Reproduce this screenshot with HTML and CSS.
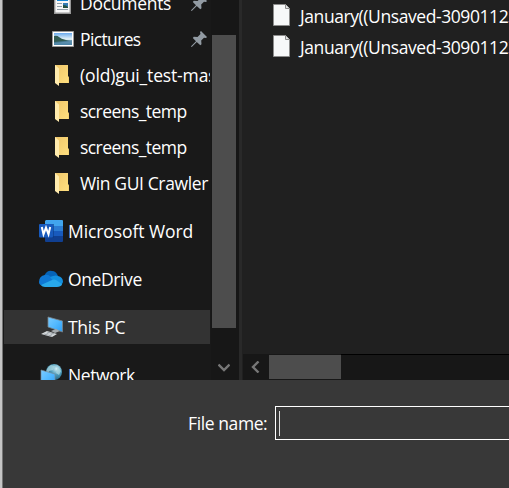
FILE: index.html
```html
<!DOCTYPE html>
<html lang="en">
<head>
<meta charset="utf-8">
<title>Save As</title>
<link rel="stylesheet" href="styles.css">
</head>
<body>
<svg class="defs" aria-hidden="true">
  <defs>
    <linearGradient id="fold" x1="0" y1="0" x2="1" y2="1"><stop offset="0" stop-color="#efc66a"/><stop offset="1" stop-color="#ffe080"/></linearGradient>
    <linearGradient id="sky" x1="0" y1="0" x2="0" y2="1"><stop offset="0" stop-color="#69a9ed"/><stop offset=".5" stop-color="#e4f2f7"/><stop offset="1" stop-color="#5794bd"/></linearGradient>
    <linearGradient id="screen" x1="0" y1="0" x2="1" y2="1"><stop offset="0" stop-color="#7acbff"/><stop offset=".5" stop-color="#53b9ff"/><stop offset="1" stop-color="#2d9df4"/></linearGradient>
    <radialGradient id="globe" cx=".65" cy=".3" r=".8"><stop offset="0" stop-color="#d4f0f7"/><stop offset=".45" stop-color="#4c9bb9"/><stop offset="1" stop-color="#1d5879"/></radialGradient>
    <symbol id="folder" viewBox="0 0 15 21"><path d="M1 0h13v11l1 2v5H4L1 15z" fill="url(#fold)"/><path d="M1 0l4 3.500V21l-4-3z" fill="#ffebad"/><path d="M14 11l1 2v5h-1z" fill="#f3d173"/></symbol>
    <symbol id="pin" viewBox="0 0 16 16"><path d="M10 0l6 6-1 1-2-.3-2.800 2.800.3 3.700-1.200 1L5.800 11 1 15.800 0 16l.3-1L5 10.200 1.800 7l1-1.200 3.700.3 3-3L9 1z" fill="#929ba3"/></symbol>
    <symbol id="page" viewBox="0 0 17 22"><path d="M.5.5h12l4 4v17H.5z" fill="#f7f8f9" stroke="#8c8c8c"/><path d="M12.500.5v4h4" fill="#e2e3e4" stroke="#8c8c8c"/></symbol>
  </defs>
</svg>
<div class="dialog">
  <div class="browser">
    <nav class="tree">
      <div class="row sub"><svg class="doc" viewBox="0 0 17 22"><path d="M.7.7h15.600v20.600H.7z" fill="#f7f7f7" stroke="#979797" stroke-width="1.400"/><path d="M3 3h11v6H3z" fill="#1687d5"/><path d="M3 11.500h5M3 14.500h5M3 17.500h11" stroke="#92a0aa"/><path d="M9 11h5v5H9z" fill="#347cb4"/><path d="M9 13q3 0 5 2v1H9z" fill="#23513f"/></svg><span class="label docs">Documents</span><svg class="pin"><use href="#pin"/></svg></div>
      <div class="row sub"><svg class="pic" viewBox="0 0 22 16"><path d="M.5.5h21v15H.5z" fill="#fff" stroke="#999"/><path d="M2 2h18v12H2z" fill="url(#sky)"/><path d="M2 5q3-1 5 1t7 3l5 1-8 1-9 1z" fill="#315b52"/><path d="M2 11l18-2v5H2z" fill="#477d9e" opacity=".75"/></svg><span class="label pics">Pictures</span><svg class="pin"><use href="#pin"/></svg></div>
      <div class="row sub"><svg class="folder"><use href="#folder"/></svg><span class="label old">(old)gui_test-master</span></div>
      <div class="row sub"><svg class="folder"><use href="#folder"/></svg><span class="label temp">screens_temp</span></div>
      <div class="row sub"><svg class="folder"><use href="#folder"/></svg><span class="label temp">screens_temp</span></div>
      <div class="row sub"><svg class="folder"><use href="#folder"/></svg><span class="label crawler">Win GUI Crawler</span></div>
      <div class="row root first"><svg class="app" viewBox="0 0 24 24"><path d="M7 1h16a1 1 0 0 1 1 1v5H6V2z" fill="#41a5ee"/><path d="M6 7h18v5H6z" fill="#2b7cd3"/><path d="M6 12h18v5H6z" fill="#185abd"/><path d="M6 17h18v5a1 1 0 0 1-1 1H7a1 1 0 0 1-1-1z" fill="#103f91"/><path d="M6 5h9v14H6z" fill="#0b3b82" opacity=".6"/><rect y="5" width="14" height="13.500" rx="1" fill="#185abd"/><path d="M2.800 8l1.700 7.300L7 8.600l2.500 6.700L11.200 8" fill="none" stroke="#fff" stroke-width="2"/></svg><span class="label word">Microsoft Word</span></div>
      <div class="row root"><svg class="app" viewBox="0 0 24 24"><path d="M5 9Q8 3 13 4q4 0 6 5l-4 5z" fill="#0664b8"/><path d="M0 15q0-6 6-7 3-1 6 2l4 2-12 7q-4-1-4-4z" fill="#0f78d4"/><path d="M11 10l3-1q3-1 5 0 5 1 5 6l-2 4-7-4z" fill="#1490df"/><path d="M2 18l11-5q2-1 4 0l6 4q-1 3-5 3H6q-3 0-4-2z" fill="#28a8ea"/></svg><span class="label drive">OneDrive</span></div>
      <div class="row root selected"><svg class="app" viewBox="0 0 24 24"><path d="M9 2l14.500 4v11L9 12z" fill="url(#screen)" stroke="#78858d" stroke-width=".8"/><path d="M12 16l5-2 4 2-5 2z" fill="#a5aaad"/><path d="M2 19l6-3 10 3-5 3z" fill="#d5d9db"/><path d="M5 19l8 2M8 17l7 2M6 20l5-3M10 21l5-3" stroke="#8b9298" stroke-width=".6"/></svg><span class="label pc">This PC</span></div>
      <div class="row root"><svg class="app" viewBox="0 0 24 24"><circle cx="15" cy="9" r="8" fill="url(#globe)"/><path d="M12 2l4 1-2 4-4 1-1 5-2-4q1-5 5-7zm7 2l3 4-2 4-3-2z" fill="#a9d6df" opacity=".75"/><path d="M2 7l14 4v13L2 20z" fill="url(#screen)" stroke="#788e9b" stroke-width=".7"/></svg><span class="label net">Network</span></div>
    </nav>
    <div class="vscroll"><div class="vthumb"></div><svg class="down" viewBox="0 0 12 10"><path d="M.5 1.500L6 7l5.500-5.500" fill="none" stroke="#777" stroke-width="2.400"/></svg></div>
    <div class="divider"></div>
    <main class="files">
      <div class="list">
        <div class="file"><svg class="page"><use href="#page"/></svg><span class="filename">January((Unsaved-309011234</span></div>
        <div class="file"><svg class="page"><use href="#page"/></svg><span class="filename">January((Unsaved-309011234</span></div>
      </div>
      <div class="hscroll"><svg class="left" viewBox="0 0 10 12"><path d="M8.500 .5L3 6l5.500 5.500" fill="none" stroke="#777" stroke-width="2.400"/></svg><div class="hthumb"></div><div class="htrack"></div></div>
    </main>
  </div>
  <footer class="footer"><span class="field-label">File name:</span><div class="input"><i class="caret"></i></div></footer>
</div>
</body>
</html>
```
FILE: styles.css
```css
* { box-sizing: border-box; }
body { margin: 0; overflow: hidden; color: #fff; background: #383838; font: 17.5px/24px "Open Sans", "Noto Sans", sans-serif; }
.defs { position: absolute; width: 0; height: 0; }
svg { display: block; flex: none; }
.dialog { width: 509px; height: 488px; border-left: 2px solid #c5c5c5; box-shadow: inset 1px 0 #757575; overflow: hidden; padding-left: 1px; }
.browser { display: flex; height: 380px; background: #191919; overflow: hidden; }
.tree { width: 208px; overflow: hidden; flex: none; }
.tree .row:first-child { margin-top: -14px; }
.row { display: flex; align-items: center; height: 36px; width: 207px; white-space: nowrap; overflow: hidden; }
.sub { padding-left: 49px; }
.root { height: 34px; margin-top: 14px; padding-left: 36px; }
.first { margin-top: 12px; }
.selected { background: #333; margin-left: 1px; padding-left: 35px; width: 206px; }
.label { flex: none; }
.sub .label { margin-top: -2px; }
.folder { width: 15px; height: 21px; margin: -1px 11px 0 2px; }
.doc { width: 17px; height: 22px; margin: -2px 9px 0 2px; }
.pic { width: 22px; height: 16px; margin: -2px 6px 0 0; }
.app { width: 24px; height: 24px; margin-right: 5px; }
.pin { width: 16px; height: 16px; margin: -2px 3px 0 auto; }
.docs { letter-spacing: -.28px; }
.pics { letter-spacing: -.63px; }
.old { letter-spacing: -.14px; }
.temp { letter-spacing: -.55px; }
.crawler { letter-spacing: -.38px; }
.word { letter-spacing: -.08px; }
.drive { letter-spacing: -.4px; }
.pc { letter-spacing: -.3px; }
.net { letter-spacing: -.4px; }
.vscroll { width: 27px; flex: none; padding: 35px 1px 0; background: #171717; }
.vthumb { width: 24px; height: 293px; background: #4d4d4d; }
.down { width: 12px; height: 10px; margin: 35px 0 0 6px; }
.divider { width: 4px; background: #292929; border-left: 1px solid #171717; flex: none; }
.files { flex: 1; min-width: 0; background: #202020; display: flex; flex-direction: column; }
.list { height: 354px; padding: 1px 0 0 31px; }
.file { display: flex; align-items: center; height: 31px; white-space: nowrap; }
.page { width: 17px; height: 22px; margin-right: 10px; margin-top: -3px; }
.filename { letter-spacing: -.42px; margin-top: -2px; }
.hscroll { display: flex; height: 26px; margin-left: 1px; background: #171717; }
.left { width: 10px; height: 12px; margin: 7px 9px 0 7px; }
.hthumb { width: 72px; height: 24px; margin-top: 1px; background: #4d4d4d; }
.htrack { flex: 1; border-top: 1px solid #000; }
.footer { display: flex; height: 108px; padding: 26px 0 0 185px; align-items: flex-start; }
.field-label { width: 87px; margin-top: 5px; letter-spacing: -.4px; white-space: nowrap; }
.input { flex: 1; height: 34px; border: 1px solid #fff; border-right: 0; padding: 4px 0 0 3px; }
.caret { display: block; width: 1px; height: 25px; background: #ddd; }
```
